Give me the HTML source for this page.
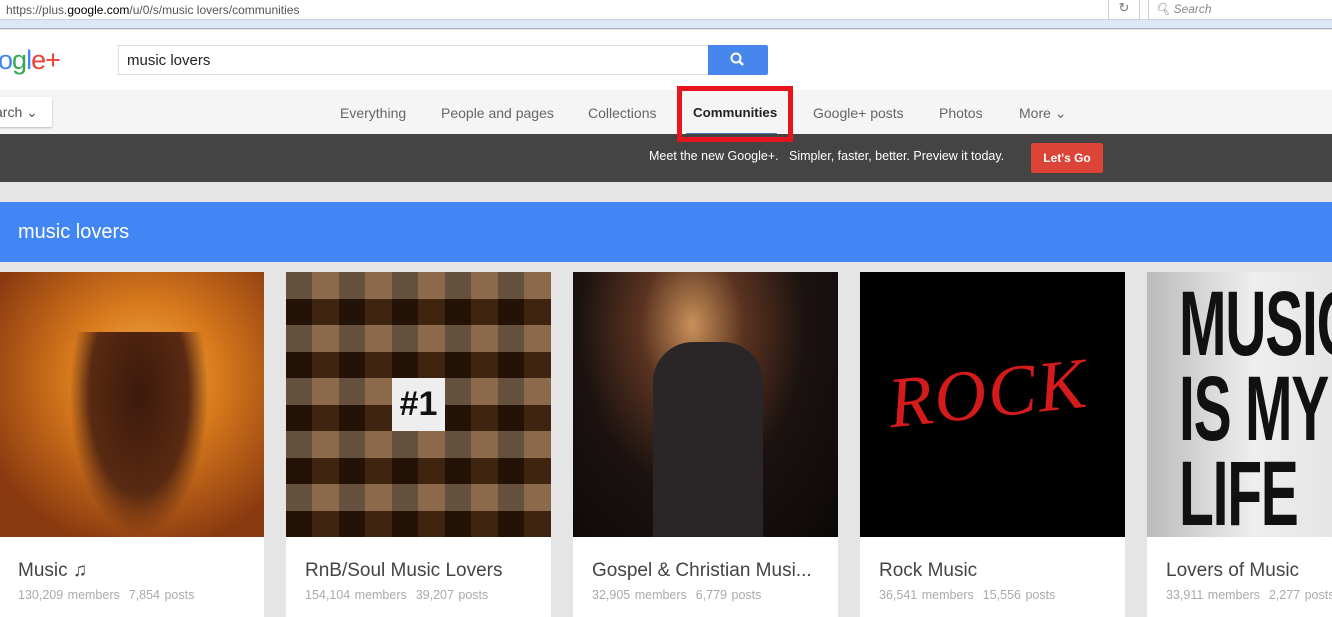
<!DOCTYPE html>
<html><head><meta charset="utf-8"><style>
*{margin:0;padding:0;box-sizing:border-box}
body{width:1332px;height:611px;overflow:hidden;background:#e5e5e5;font-family:"Liberation Sans",sans-serif;position:relative}
.a{position:absolute}
.url{top:0;left:0;width:1332px;height:20px;background:#fff;border-bottom:1px solid #c8d4e2}
.nav a{position:absolute;top:105px;font-size:14px;color:#666;text-decoration:none}
.card{position:absolute;top:272px;width:265px;height:345px;background:#fff}
.img{height:265px;overflow:hidden;position:relative}
.t{position:absolute;left:19px;top:288px;font-size:19px;color:#444;white-space:nowrap}
.s{position:absolute;left:19px;top:316px;font-size:12.5px;color:#aaa;white-space:nowrap;word-spacing:1px}
</style></head><body>
<div class="a url"><span class="a" style="left:6px;top:3px;font-size:12px;color:#555">https://plus.<b style="color:#000;font-weight:normal">google.com</b>/u/0/s/music lovers/communities</span>
<div class="a" style="left:1108px;top:0;width:32px;height:20px;border-left:1px solid #ccc;border-right:1px solid #ccc;color:#777;font-size:13px;text-align:center">&#x21bb;</div>
<div class="a" style="left:1148px;top:0;width:184px;height:20px;border-left:1px solid #ccc;font-size:12px;color:#888;font-style:italic;padding:2px 6px">&#x1F50D;&#xFE0E; Search</div></div>
<div class="a" style="top:20px;left:0;width:1332px;height:9px;background:#dde8f5;border-bottom:1px solid #aac"></div>
<div class="a" style="top:30px;left:0;width:1332px;height:60px;background:#fff"></div>
<div class="a" style="left:-2px;top:45px;font-size:27px;letter-spacing:-1px"><span style="color:#4285f4">o</span><span style="color:#34a853">g</span><span style="color:#4285f4">l</span><span style="color:#ea4335">e</span><span style="color:#ea4335;font-weight:300">+</span></div>
<div class="a" style="left:118px;top:45px;width:592px;height:30px;border:1px solid #ddd;font-size:15px;padding:6px 8px;color:#222">music lovers</div>
<div class="a" style="left:708px;top:45px;width:60px;height:30px;background:#4787ed;border-radius:0 2px 2px 0"><svg width="60" height="30"><circle cx="28" cy="13" r="4.5" stroke="#fff" stroke-width="2" fill="none"/><line x1="31" y1="16" x2="35" y2="20" stroke="#fff" stroke-width="2.5"/></svg></div>
<div class="a" style="top:90px;left:0;width:1332px;height:44px;background:#f5f5f5"></div>
<div class="a" style="left:-5px;top:97px;width:57px;height:30px;background:#fff;border-radius:2px;box-shadow:0 1px 2px rgba(0,0,0,.25);font-size:14px;color:#555;padding:7px 0 0 0">arch &#x2304;</div>
<div class="nav"><a style="left:340px">Everything</a><a style="left:441px">People and pages</a><a style="left:588px">Collections</a><a style="left:693px;color:#222;font-weight:bold;font-size:13.3px">Communities</a><a style="left:813px">Google+ posts</a><a style="left:939px">Photos</a><a style="left:1019px">More &#x2304;</a></div>
<div class="a" style="left:686px;top:133px;width:91px;height:2px;background:#4a78c0"></div>
<div class="a" style="top:134px;left:0;width:1332px;height:48px;background:#444"></div>
<div class="a" style="left:677px;top:86px;width:116px;height:56px;border:5px solid #e8141e"></div>
<div class="a" style="left:649px;top:149px;font-size:12.5px;color:#fff;word-spacing:0">Meet the new Google+.&nbsp;&nbsp; Simpler, faster, better. Preview it today.</div>
<div class="a" style="left:1031px;top:143px;width:72px;height:30px;background:#db4437;border-radius:2px;color:#fff;font-size:12px;font-weight:bold;text-align:center;line-height:30px">Let's Go</div>
<div class="a" style="top:202px;left:0;width:1332px;height:60px;background:#4285f4;color:#fff;font-size:20px;padding:19px 18px">music lovers</div>

<div class="card" style="left:-1px"><div class="img" style="background:radial-gradient(circle at 55% 40%,#f6b14a 0,#d7791c 35%,#8a3a10 80%)"><div class="a" style="left:70px;top:60px;width:140px;height:205px;background:radial-gradient(ellipse at 50% 30%,#3a1a0c,#5a2a12 50%,transparent 70%)"></div></div><div class="t">Music &#x266B;</div><div class="s">130,209 members &nbsp;7,854 posts</div></div>
<div class="card" style="left:286px"><div class="img" style="background:repeating-linear-gradient(90deg,#5a3b22 0 26px,#c8a77a 26px 53px),#7a5535;background-blend-mode:multiply"><div class="a" style="inset:0;background:repeating-linear-gradient(0deg,rgba(30,15,5,.5) 0 26px,rgba(240,220,190,.3) 26px 53px)"></div><div class="a" style="left:106px;top:106px;width:53px;height:53px;background:#eee;font-size:34px;font-weight:bold;text-align:center;line-height:53px;color:#111">#1</div></div><div class="t">RnB/Soul Music Lovers</div><div class="s">154,104 members &nbsp;39,207 posts</div></div>
<div class="card" style="left:573px"><div class="img" style="background:radial-gradient(ellipse at 45% 20%,#c9905a 0,#5a3320 25%,#1b1210 55%,#0c0808 100%)"><div class="a" style="left:80px;top:70px;width:110px;height:195px;background:#2a2526;border-radius:40px 40px 0 0"></div></div><div class="t">Gospel &amp; Christian Musi...</div><div class="s">32,905 members &nbsp;6,779 posts</div></div>
<div class="card" style="left:860px"><div class="img" style="background:#000"><div class="a" style="left:28px;top:80px;font-size:72px;color:#d31b1b;font-family:'Liberation Serif',serif;font-style:italic;transform:rotate(-6deg);letter-spacing:2px">ROCK</div></div><div class="t">Rock Music</div><div class="s">36,541 members &nbsp;15,556 posts</div></div>
<div class="card" style="left:1147px"><div class="img" style="background:linear-gradient(90deg,#bbb,#eee 40%,#ddd)"><div class="a" style="left:32px;top:10px;font-size:92px;line-height:85px;font-weight:bold;color:#111;transform:scaleX(.62);transform-origin:0 0;letter-spacing:-2px">MUSIC<br>IS MY<br>LIFE</div></div><div class="t">Lovers of Music</div><div class="s">33,911 members &nbsp;2,277 posts</div></div>
</body></html>
